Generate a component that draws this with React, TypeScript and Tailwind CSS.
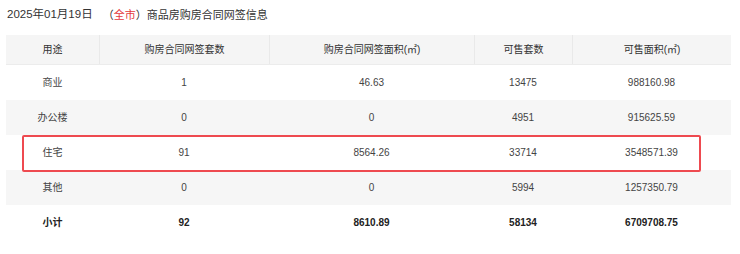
import React from 'react';

interface Row {
  use: string;
  signedCount: string;
  signedArea: string;
  saleCount: string;
  saleArea: string;
}

const ROWS: Row[] = [
  { use: '商业', signedCount: '1', signedArea: '46.63', saleCount: '13475', saleArea: '988160.98' },
  { use: '办公楼', signedCount: '0', signedArea: '0', saleCount: '4951', saleArea: '915625.59' },
  { use: '住宅', signedCount: '91', signedArea: '8564.26', saleCount: '33714', saleArea: '3548571.39' },
  { use: '其他', signedCount: '0', signedArea: '0', saleCount: '5994', saleArea: '1257350.79' },
];

const TOTAL: Row = { use: '小计', signedCount: '92', signedArea: '8610.89', saleCount: '58134', saleArea: '6709708.75' };

const HEADERS = ['用途', '购房合同网签套数', '购房合同网签面积(㎡)', '可售套数', '可售面积(㎡)'];

const GRID = 'grid grid-cols-[93px_170px_205px_98px_159px]';

function Cells({ row, bold }: { row: Row; bold?: boolean }) {
  const cls = `flex items-center justify-center ${bold ? 'font-bold text-[#222]' : ''}`;
  return (
    <>
      <div className={cls}>{row.use}</div>
      <div className={cls}>{row.signedCount}</div>
      <div className={cls}>{row.signedArea}</div>
      <div className={cls}>{row.saleCount}</div>
      <div className={cls}>{row.saleArea}</div>
    </>
  );
}

export default function App() {
  return (
    <div
      className="w-[740px] h-[254px] bg-white text-[#333]"
      style={{ fontFamily: '"Liberation Sans", "Noto Sans CJK SC", sans-serif' }}
    >
      <div className="h-[30px] flex items-center pl-[7px] text-[11px] text-[#333]">
        <span className="text-[11.5px]">2025年01月19日</span>
        <span className="ml-[10px]">（</span>
        <span className="text-[#e4393c]">全市</span>
        <span>）商品房购房合同网签信息</span>
      </div>
      <div className="relative mt-[5px] ml-[6px] w-[725px] text-[10px] text-[#444]">
        <div className={`${GRID} h-[30px] bg-[#f5f5f5] border-b border-[#ececec]`}>
          {HEADERS.map((h, i) => (
            <div
              key={h}
              className={`flex items-center justify-center text-[#333] ${i > 0 ? 'border-l border-[#e9e9e9]' : ''}`}
            >
              {h}
            </div>
          ))}
        </div>
        {ROWS.map((row, i) => (
          <div key={row.use} className={`${GRID} h-[35px] ${i % 2 === 1 ? 'bg-[#f6f6f6]' : 'bg-white'}`}>
            <Cells row={row} />
          </div>
        ))}
        <div className={`${GRID} h-[35px] bg-white`}>
          <Cells row={TOTAL} bold />
        </div>
        {/* highlight over the 住宅 row */}
        <div className="absolute left-[16px] top-[100px] w-[679px] h-[37px] border-[2.5px] border-[#ee4a50] rounded-[2px] pointer-events-none" />
      </div>
    </div>
  );
}
